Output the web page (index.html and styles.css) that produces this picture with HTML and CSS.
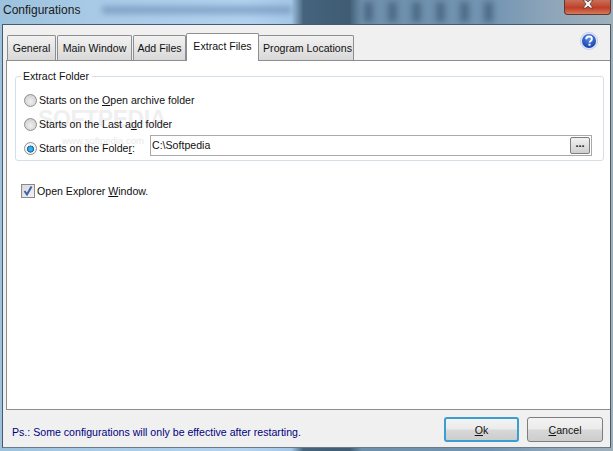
FILE: index.html
```html
<!DOCTYPE html>
<html lang="en">
<head>
<meta charset="utf-8">
<title>Configurations</title>
<link rel="stylesheet" href="styles.css">
</head>
<body>
<div class="window">
  <header class="titlebar">
    <span class="title">Configurations</span>
    <button class="close" aria-label="Close"><svg width="14" height="10" viewBox="0 0 14 10"><path d="M2 0h3l2 2 2-2h3L9 4l3 4H9L7 6 5 8H2l3-4z" fill="#f4f4f4" stroke="#5c3a34" stroke-width=".8"/></svg></button>
  </header>
  <div class="client">
    <div class="tabbar">
      <div class="tabs">
        <span class="tab t1">General</span>
        <span class="tab t2">Main Window</span>
        <span class="tab t3">Add Files</span>
        <span class="tab active">Extract Files</span>
        <span class="tab t5">Program Locations</span>
      </div>
      <svg class="help" width="18" height="18" viewBox="0 0 18 18">
        <defs><radialGradient id="h" cx=".5" cy=".3" r=".75"><stop offset="0" stop-color="#5b8de8"/><stop offset="1" stop-color="#0f3aa8"/></radialGradient></defs>
        <circle cx="9" cy="9" r="8.6" fill="#dfe6f5" stroke="#b4c3e0" stroke-width=".6"/>
        <circle cx="9" cy="9" r="7" fill="url(#h)"/>
        <path d="M6.200 7.200C6.200 5.400 7.500 4.500 9 4.500c1.700 0 2.900 1 2.900 2.400 0 2-2.300 2-2.300 3.600" fill="none" stroke="#fff" stroke-width="1.900"/>
        <rect x="8.500" y="11.700" width="2" height="2" fill="#fff"/>
      </svg>
    </div>
    <main class="panel">
      <fieldset class="group">
        <legend>Extract Folder</legend>
        <div class="watermark"><span class="wm-main">SOFTPEDIA</span><span class="wm-url">www.softpedia.com</span></div>
        <div class="row"><span class="radio"></span><span>Starts on the <u>O</u>pen archive folder</span></div>
        <div class="row"><span class="radio"></span><span>Starts on the Last a<u>d</u>d folder</span></div>
        <div class="row">
          <span class="radio on"></span><span class="folder-label">Starts on the Folde<u>r</u>:</span>
          <div class="path"><span>C:\Softpedia</span><button class="browse">...</button></div>
        </div>
      </fieldset>
      <div class="check-row">
        <span class="check"><svg width="12" height="12" viewBox="0 0 12 12"><path d="M2.500 6l2.500 3.500L9.500 1.500" fill="none" stroke="#3c5fae" stroke-width="2"/></svg></span>
        <span>Open Explorer <u>W</u>indow.</span>
      </div>
    </main>
    <footer class="footer">
      <span class="note">Ps.: Some configurations will only be effective after restarting.</span>
      <div class="buttons">
        <button class="btn default"><u>O</u>k</button>
        <button class="btn"><u>C</u>ancel</button>
      </div>
    </footer>
  </div>
</div>
</body>
</html>
```
FILE: styles.css
```css
* { box-sizing: border-box; }
html, body { margin: 0; height: 100%; }
body { font: 10.6px "Liberation Sans", Tahoma, sans-serif; color: #111; overflow: hidden; }
.window {
  width: 613px; height: 451px; display: flex; flex-direction: column;
  padding: 0 2px 3px 2px;
  background: linear-gradient(90deg, #9cc2dd 0, #aacbe8 17%, #b2d2f0 40%, #a6c8e8 47.500%, #45637c 49.500%, #3f5c74 57%, #6f90ac 59%, #7394b2 80%, #8ea6ba 90%, #9fb0ba 100%);
}
.titlebar { height: 24px; flex: none; display: flex; justify-content: space-between; align-items: flex-start; position: relative; overflow: hidden; }
.titlebar::before {
  content: ""; position: absolute; left: 100px; top: 6px; width: 190px; height: 8px;
  background: #5f7fa8; opacity: .55; filter: blur(3px);
}
.titlebar::after {
  content: ""; position: absolute; left: 362px; top: 2px; width: 140px; height: 20px;
  background: repeating-linear-gradient(90deg, #34506a 0 9px, transparent 9px 24px);
  opacity: .6; filter: blur(3px);
}
.title { font-size: 12px; padding: 3px 0 0 1px; color: #1a1a1a; position: relative; z-index: 1; }
.close {
  width: 47px; height: 15px; padding: 0; border: 1px solid #5c3a34; border-top: 0; position: relative; z-index: 1;
  border-radius: 0 0 4px 4px; display: flex; align-items: flex-start; justify-content: center;
  background: linear-gradient(#c9705a, #bf3f28 55%, #d8795a);
}
.client { flex: 1; min-height: 0; background: #f0f0f0; border: 1px solid #4a5a68; border-bottom-color: #6a7a88; padding: 8px 0 0 3px; display: flex; flex-direction: column; }
.tabbar { height: 27px; flex: none; display: flex; justify-content: space-between; align-items: flex-start; position: relative; z-index: 1; }
.tabs { display: flex; align-items: flex-end; height: 27px; padding-left: 1px; }
.tab {
  height: 25px; border: 1px solid #8e8e8e; border-bottom: 0; margin-right: 1px; white-space: nowrap;
  background: linear-gradient(#f2f2f2, #d8d8d8); display: flex; align-items: center; justify-content: center;
  border-radius: 2px 2px 0 0;
}
.t1 { width: 49px; }
.t2 { width: 75px; }
.t3 { width: 53px; margin-right: 0; }
.t5 { width: 96px; margin-left: -1px; padding-left: 3px; }
.active { width: 73px; height: 28px; background: #fff; margin-right: 0; padding: 0 0 3px; position: relative; z-index: 2; margin-bottom: -1px; }
.help { margin: -1px 12px 0 0; }
.panel { height: 350px; flex: none; background: #fff; border: 1px solid #8e8e8e; border-right: 0; padding: 9px 2px 0 8px; }
.group { margin: 0; padding: 5px 10px 0 8px; height: 91px; border: 1px solid #d5dfe5; border-radius: 3px; width: 589px; position: relative; }
.group legend { padding: 0 3px 0 2px; margin-left: -3px; line-height: 13px; }
.watermark { position: absolute; left: 22px; top: 24px; width: 130px; color: #efefef; }
.wm-main { display: block; font: bold 23px "Liberation Sans", sans-serif; line-height: 24px; letter-spacing: -.4px; }
.wm-url { display: block; font-size: 9.5px; margin: 4px 0 0 24px; color: #e8e8e8; }
.row { display: flex; align-items: center; height: 24px; gap: 2px; position: relative; }
.radio {
  width: 13px; height: 13px; border-radius: 50%; border: 1px solid #8f8f8f; flex: none;
  background: radial-gradient(circle at 50% 60%, #f0f0f0, #c8c8c8);
}
.radio.on { background: radial-gradient(circle at 50% 55%, #35b0e6 0 22%, #0f5fa8 40%, #f4f4f4 46%); }
.folder-label { width: 109px; flex: none; }
.path { width: 442px; height: 21px; margin-top: -6px; flex: none; border: 1px solid #a9a9a9; display: flex; align-items: center; justify-content: space-between; padding: 0 1px 0 1px; background: #fff; }
.browse {
  width: 20px; height: 17px; padding: 0 0 5px; border: 1px solid #7d7d7d; border-radius: 2px;
  font: bold 11px "Liberation Sans", sans-serif; line-height: 10px; background: linear-gradient(#f2f2f2, #cfcfcf); color: #111;
}
.check-row { display: flex; align-items: center; gap: 2px; margin: 23px 0 0 6px; height: 14px; }
.check { width: 14px; height: 14px; border: 1px solid #8a8a8a; background: linear-gradient(135deg, #d8d8d8, #f2f2f2); display: flex; align-items: center; justify-content: center; flex: none; }
.footer { flex: 1; min-height: 0; display: flex; justify-content: space-between; align-items: flex-start; padding: 7px 0 0 6px; }
.note { color: #00007f; padding-top: 9px; }
.buttons { display: flex; gap: 8px; margin-right: 7px; }
.btn {
  width: 76px; height: 25px; padding: 0; font: 10.6px "Liberation Sans", sans-serif; color: #111;
  border: 1px solid #7d7d7d; border-radius: 3px; background: linear-gradient(#f3f3f3 0, #ebebeb 48%, #d8d8d8 52%, #cdcdcd 100%);
}
.default { width: 75px; border: 2px solid #3c9dd0; }
```
